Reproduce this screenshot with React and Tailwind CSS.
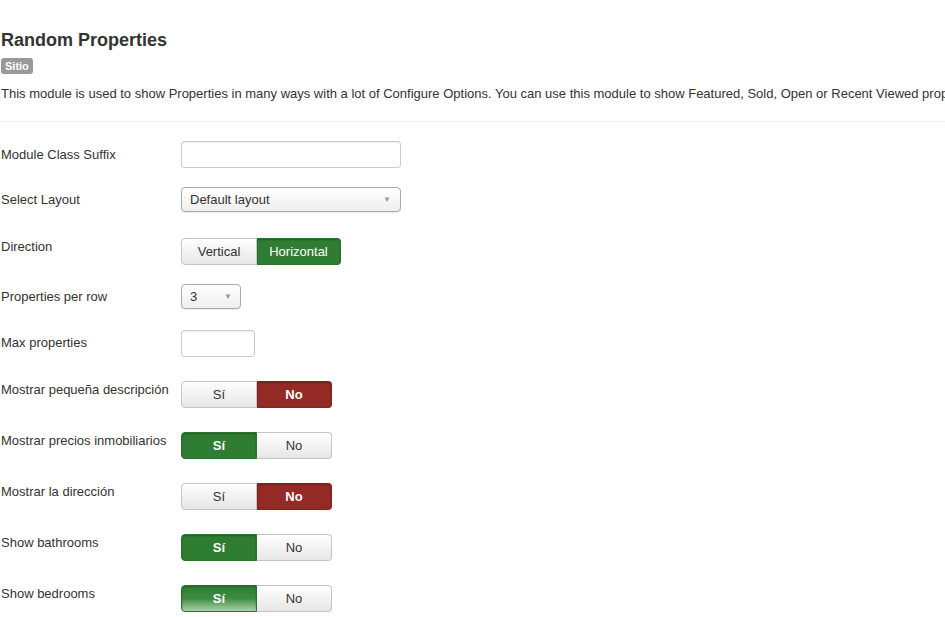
import React from 'react';

const font = { fontFamily: '"Liberation Sans", Arial, sans-serif' };

function Toggle({ options, active, color, hover, bold = true }) {
  return (
    <div className="flex h-[27px]">
      {options.map((o, i) => {
        const on = i === active;
        const first = i === 0;
        const last = i === options.length - 1;
        const radius = first ? 'rounded-l-[4px]' : last ? 'rounded-r-[4px]' : '';
        const weight = on && bold ? 'font-bold' : '';
        let cls;
        if (on && color === 'green' && hover) {
          cls = 'bg-gradient-to-b from-[#2f7d32] via-[#3d8c40] to-[#a9d3aa] text-white border-[#2b722e] shadow-[inset_0_1px_2px_rgba(0,0,0,0.25)]';
        } else if (on && color === 'green') {
          cls = 'bg-[#2f7d32] text-white border-[#2b722e] shadow-[inset_0_1px_2px_rgba(0,0,0,0.25)]';
        } else if (on && color === 'red') {
          cls = 'bg-[#942a25] text-white border-[#86231f] shadow-[inset_0_1px_2px_rgba(0,0,0,0.25)]';
        } else {
          cls = 'bg-gradient-to-b from-white to-[#e6e6e6] text-[#333] border-[#c5c5c5]';
        }
        return (
          <div
            key={o.label}
            className={`flex items-center justify-center border text-[13px] ${radius} ${cls} ${weight} ${first ? '' : 'border-l-0'}`}
            style={{ width: o.w }}
          >
            {o.label}
          </div>
        );
      })}
    </div>
  );
}

function Row({ label, h, labelPad, children }) {
  return (
    <div className="flex items-start" style={{ height: h }}>
      <div className="w-[180px] text-[13px] leading-[18px] text-[#333]" style={{ paddingTop: labelPad }}>
        {label}
      </div>
      <div>{children}</div>
    </div>
  );
}

const siNo = [{ label: 'Sí', w: 76 }, { label: 'No', w: 75 }];

function Caret() {
  return <span className="text-[8px] text-[#999]">▼</span>;
}

export default function App() {
  return (
    <div className="w-[945px] h-[617px] overflow-hidden bg-white text-[#333] pl-px" style={font}>
      <h1 className="pt-[29px] text-[18px] font-bold leading-[22px] text-[#333]">Random Properties</h1>
      <div className="mt-[7px] inline-block h-[16px] rounded-[3px] bg-[#999] px-[4px] text-[11px] font-bold leading-[16px] text-white">Sitio</div>
      <p className="mt-[8px] whitespace-nowrap text-[13px] leading-[18px]">
        This module is used to show Properties in many ways with a lot of Configure Options. You can use this module to show Featured, Sold, Open or Recent Viewed properties.
      </p>
      <div className="-ml-px mt-[18px] border-t border-[#eee]" />

      <div className="mt-[19px]">
        <Row label="Module Class Suffix" h={46} labelPad={5}>
          <div className="h-[27px] w-[220px] rounded-[3px] border border-[#ccc] bg-white shadow-[inset_0_1px_1px_rgba(0,0,0,0.075)]" />
        </Row>
        <Row label="Select Layout" h={51} labelPad={4}>
          <div className="flex h-[25px] w-[220px] items-center justify-between rounded-[4px] border border-[#aaa] bg-gradient-to-b from-white to-[#eee] pl-[8px] pr-[9px] text-[13px] shadow-[0_1px_1px_rgba(0,0,0,0.08)]">
            <span>Default layout</span>
            <Caret />
          </div>
        </Row>
        <Row label="Direction" h={46} labelPad={0}>
          <Toggle options={[{ label: 'Vertical', w: 76 }, { label: 'Horizontal', w: 84 }]} active={1} color="green" bold={false} />
        </Row>
        <Row label="Properties per row" h={46} labelPad={4}>
          <div className="flex h-[25px] w-[60px] items-center justify-between rounded-[4px] border border-[#aaa] bg-gradient-to-b from-white to-[#eee] pl-[8px] pr-[8px] text-[13px] shadow-[0_1px_1px_rgba(0,0,0,0.08)]">
            <span>3</span>
            <Caret />
          </div>
        </Row>
        <Row label="Max properties" h={51} labelPad={4}>
          <div className="h-[27px] w-[74px] rounded-[3px] border border-[#ccc] bg-white shadow-[inset_0_1px_1px_rgba(0,0,0,0.075)]" />
        </Row>
        <Row label="Mostrar pequeña descripción" h={51} labelPad={0}>
          <Toggle options={siNo} active={1} color="red" />
        </Row>
        <Row label="Mostrar precios inmobiliarios" h={51} labelPad={0}>
          <Toggle options={siNo} active={0} color="green" />
        </Row>
        <Row label="Mostrar la dirección" h={51} labelPad={0}>
          <Toggle options={siNo} active={1} color="red" />
        </Row>
        <Row label="Show bathrooms" h={51} labelPad={0}>
          <Toggle options={siNo} active={0} color="green" />
        </Row>
        <Row label="Show bedrooms" h={51} labelPad={0}>
          <Toggle options={siNo} active={0} color="green" hover />
        </Row>
      </div>
    </div>
  );
}
